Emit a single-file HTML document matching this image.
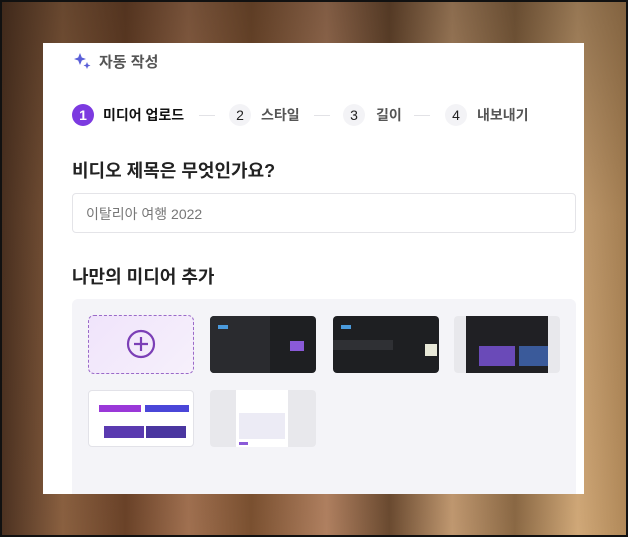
<!DOCTYPE html>
<html><head><meta charset="utf-8"><style>
*{margin:0;padding:0;box-sizing:border-box}
body{width:628px;height:537px;overflow:hidden;position:relative;font-family:"Liberation Sans","Noto Sans CJK KR",sans-serif;
background:linear-gradient(180deg,rgba(40,25,15,.35) 0%,rgba(40,25,15,.1) 40%,rgba(0,0,0,0) 100%),linear-gradient(90deg,#4a3020 0%,#8a6040 10%,#6a4228 20%,#a07050 30%,#7a5030 40%,#b08060 52%,#6a4a30 62%,#c09870 72%,#8a6844 82%,#d0a878 92%,#b08858 100%);}
.frame{position:absolute;inset:0;border:2px solid #111;}
.card{position:absolute;left:43px;top:43px;width:541px;height:451px;background:#fff;}
.a{position:absolute;white-space:nowrap}
.step{position:absolute;top:104px;width:22px;height:22px;border-radius:50%;background:#f3f3f6;color:#222;font-size:14px;text-align:center;line-height:22px}
.lbl{position:absolute;top:104px;font-size:14px;line-height:22px;color:#555;font-weight:bold}
.dash{position:absolute;top:115px;width:16px;height:1px;background:#e2e2e6}
.th{position:absolute;width:106px;height:57px;border-radius:4px;overflow:hidden}
</style></head><body>
<div class="frame"></div>
<div class="card"></div>
<svg class="a" style="left:73px;top:52px" width="20" height="18" viewBox="0 0 20 18"><path d="M7 1 L8.8 5.5 L13 7 L8.8 8.5 L7 13 L5.2 8.5 L1 7 L5.2 5.5Z" fill="#5a5fd8"/><path d="M14 10 L15 12.5 L17.5 13.5 L15 14.5 L14 17 L13 14.5 L10.5 13.5 L13 12.5Z" fill="#5a5fd8"/></svg>
<div class="a" style="left:99px;top:51px;font-size:15px;font-weight:bold;color:#555">자동 작성</div>
<div class="step" style="left:72px;background:#7c3ae0;color:#fff;font-weight:bold">1</div>
<div class="lbl" style="left:103px;color:#111">미디어 업로드</div>
<div class="dash" style="left:199px"></div>
<div class="step" style="left:229px">2</div>
<div class="lbl" style="left:261px">스타일</div>
<div class="dash" style="left:314px"></div>
<div class="step" style="left:343px">3</div>
<div class="lbl" style="left:376px">길이</div>
<div class="dash" style="left:414px"></div>
<div class="step" style="left:445px">4</div>
<div class="lbl" style="left:477px">내보내기</div>
<div class="a" style="left:72px;top:157px;font-size:18px;font-weight:bold;color:#222">비디오 제목은 무엇인가요?</div>
<div class="a" style="left:72px;top:193px;width:504px;height:40px;border:1px solid #e4e4e8;border-radius:4px;font-size:14px;color:#777;padding:10px 0 0 13px">이탈리아 여행 2022</div>
<div class="a" style="left:72px;top:263px;font-size:18px;font-weight:bold;color:#222">나만의 미디어 추가</div>
<div class="a" style="left:72px;top:299px;width:504px;height:195px;background:#f4f4f8;border-radius:6px 6px 0 0"></div>
<div class="a" style="left:88px;top:315px;width:106px;height:59px;border:1px dashed #9a6ac8;border-radius:6px;background:linear-gradient(135deg,#f0e4fb,#f6f0fb)"></div>
<svg class="a" style="left:126px;top:329px" width="30" height="30" viewBox="0 0 30 30"><circle cx="15" cy="15" r="13" fill="none" stroke="#7b3fb6" stroke-width="2.2"/><path d="M15 8v14M8 15h14" stroke="#7b3fb6" stroke-width="2.2"/></svg>
<div class="th" style="left:210px;top:316px;background:#1e1f22"><div style="position:absolute;left:0;top:0;width:60px;height:57px;background:#2a2b2f"></div><div style="position:absolute;left:80px;top:25px;width:14px;height:10px;background:#8a5ad8"></div><div style="position:absolute;left:8px;top:9px;width:10px;height:4px;background:#4a9adc"></div></div>
<div class="th" style="left:333px;top:316px;background:#1e1f22"><div style="position:absolute;left:0;top:24px;width:60px;height:10px;background:#2f3034"></div><div style="position:absolute;left:92px;top:28px;width:12px;height:12px;background:#e8e8d8"></div><div style="position:absolute;left:8px;top:9px;width:10px;height:4px;background:#4a9adc"></div></div>
<div class="th" style="left:454px;top:316px;background:#e8e8ec"><div style="position:absolute;left:12px;top:0;width:82px;height:57px;background:#202024"></div><div style="position:absolute;left:25px;top:30px;width:36px;height:20px;background:#6a4ab8"></div><div style="position:absolute;left:65px;top:30px;width:29px;height:20px;background:#3a5a9a"></div></div>
<div class="th" style="left:88px;top:390px;background:#fff;border:1px solid #e2e2e8"><div style="position:absolute;left:10px;top:14px;width:42px;height:7px;background:#9a38d8"></div><div style="position:absolute;left:56px;top:14px;width:44px;height:7px;background:#4a46d8"></div><div style="position:absolute;left:15px;top:35px;width:40px;height:12px;background:#5a3ab0"></div><div style="position:absolute;left:57px;top:35px;width:40px;height:12px;background:#4a36a0"></div></div>
<div class="th" style="left:210px;top:390px;background:#e8e8ec"><div style="position:absolute;left:26px;top:0;width:52px;height:57px;background:#fff"></div><div style="position:absolute;left:29px;top:23px;width:46px;height:26px;background:#ecebf5"></div><div style="position:absolute;left:29px;top:52px;width:9px;height:3px;background:#8a5ad8"></div></div>
</body></html>
